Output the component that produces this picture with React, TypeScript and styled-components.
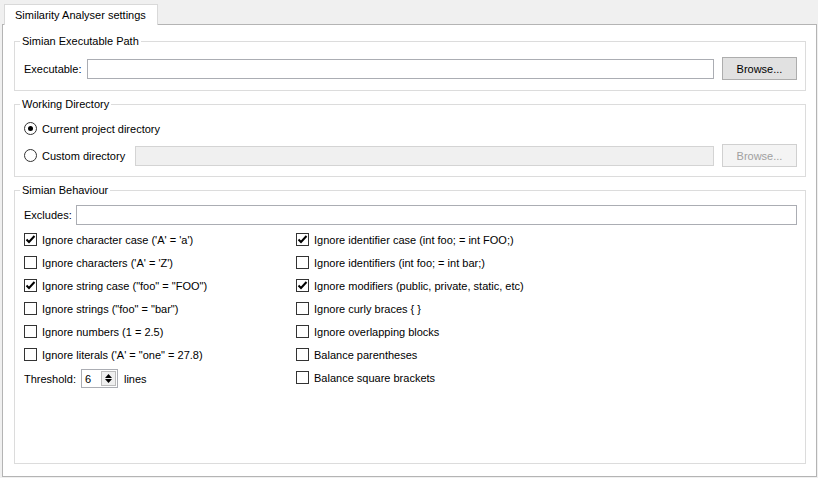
import React, { useState } from 'react';
import styled, { createGlobalStyle } from 'styled-components';

const GlobalStyle = createGlobalStyle`
    html, body {
        margin: 0;
        height: 100%;
        background: #f0f0f0;
        font-family: 'Liberation Sans', Arial, sans-serif;
        font-size: 11px;
        color: #000;
    }
    #root {
        height: 100%;
    }
`;

const Page = styled.div`
    height: 100vh;
    box-sizing: border-box;
    padding: 4px 1px 1px 2px;
    display: flex;
    flex-direction: column;
`;

const TabStrip = styled.div`
    display: flex;
    padding-left: 2px;
`;

const Tab = styled.div`
    position: relative;
    z-index: 1;
    height: 21px;
    box-sizing: border-box;
    margin-bottom: -1px;
    padding: 0 11px 0 10px;
    background: #fff;
    border: 1px solid #d9d9d9;
    border-bottom: none;
    display: flex;
    align-items: center;
    white-space: nowrap;
`;

const Panel = styled.div`
    flex: 1;
    background: #fff;
    border: 1px solid #b4b4b4;
    padding: 10px 10px 12px 11px;
    display: flex;
    flex-direction: column;
    gap: 7px;
`;

const Group = styled.fieldset<{ $grow?: boolean; $top?: number; $bottom?: number }>`
    margin: 0;
    min-width: 0;
    border: 1px solid #dcdcdc;
    padding: ${({ $top, $bottom }) => `${$top ?? 9}px 8px ${$bottom ?? 9}px 8px`};
    display: flex;
    flex-direction: column;
    flex: ${({ $grow }) => ($grow ? 1 : 'none')};
`;

const Legend = styled.legend`
    padding: 0 2px;
    margin-left: -3px;
    line-height: 13px;
`;

const Row = styled.div<{ $gap?: number }>`
    display: flex;
    align-items: center;
    gap: ${({ $gap }) => $gap ?? 8}px;
`;

const Label = styled.span<{ $after?: number }>`
    white-space: nowrap;
    margin-left: 1px;
    margin-right: ${({ $after }) => $after ?? 0}px;
`;

const TextBox = styled.input`
    flex: 1;
    height: 20px;
    box-sizing: border-box;
    border: 1px solid #abadb3;
    background: ${({ disabled }) => (disabled ? '#f0f0f0' : '#fff')};
    border-color: ${({ disabled }) => (disabled ? '#d4d4d4' : '#abadb3')};
    font: inherit;
    padding: 0 3px;
    outline: none;
`;

const Button = styled.button`
    width: 75px;
    height: 23px;
    box-sizing: border-box;
    font: inherit;
    color: #000;
    background: #e1e1e1;
    border: 1px solid #adadad;
    padding: 0;

    &:disabled {
        color: #a0a0a0;
        background: #f4f4f4;
        border-color: #d0d0d0;
    }
`;

const Stack = styled.div<{ $gap: number }>`
    display: flex;
    flex-direction: column;
    gap: ${({ $gap }) => $gap}px;
`;

const OptionLine = styled.label`
    display: flex;
    align-items: center;
    height: 17px;
    gap: 5px;
    padding-left: 1px;
    white-space: nowrap;
    cursor: default;
`;

const Box = styled.span`
    width: 13px;
    height: 13px;
    box-sizing: border-box;
    border: 1px solid #333;
    background: #fff;
    display: flex;
    align-items: center;
    justify-content: center;
    flex: none;
`;

const RadioCircle = styled(Box)`
    border-radius: 50%;
    border-color: #333;
`;

const Dot = styled.span`
    width: 5px;
    height: 5px;
    border-radius: 50%;
    background: #000;
`;

const Columns = styled.div`
    display: grid;
    grid-template-columns: 272px 1fr;
    margin-top: 6px;
`;

const SpinBox = styled.div`
    width: 37px;
    height: 19px;
    box-sizing: border-box;
    border: 1px solid #abadb3;
    display: flex;
    align-items: center;
    margin: 0 6px 0 5px;
`;

const SpinValue = styled.span`
    flex: 1;
    padding-left: 3px;
`;

const SpinArrows = styled.div`
    width: 15px;
    height: 15px;
    margin-right: 1px;
    box-sizing: border-box;
    border: 1px solid #bcbcbc;
    background: #efefef;
    display: flex;
    flex-direction: column;
    align-items: center;
    justify-content: center;
    gap: 1px;
`;

function Check({ checked, label }: { checked: boolean; label: string }) {
    const [on, setOn] = useState(checked);
    return (
        <OptionLine onClick={() => setOn(v => !v)}>
            <Box>
                {on && (
                    <svg width="11" height="11" viewBox="0 0 11 11">
                        <path d="M1.5 5.5 L4 8 L9.5 2" fill="none" stroke="#000" strokeWidth="2" />
                    </svg>
                )}
            </Box>
            {label}
        </OptionLine>
    );
}

function Radio({ checked, label }: { checked: boolean; label: string }) {
    return (
        <OptionLine>
            <RadioCircle>{checked && <Dot />}</RadioCircle>
            {label}
        </OptionLine>
    );
}

const leftOptions: [string, boolean][] = [
    ["Ignore character case ('A' = 'a')", true],
    ["Ignore characters ('A' = 'Z')", false],
    ['Ignore string case ("foo" = "FOO")', true],
    ['Ignore strings ("foo" = "bar")', false],
    ['Ignore numbers (1 = 2.5)', false],
    ['Ignore literals (\'A\' = "one" = 27.8)', false],
];

const rightOptions: [string, boolean][] = [
    ['Ignore identifier case (int foo; = int FOO;)', true],
    ['Ignore identifiers (int foo; = int bar;)', false],
    ['Ignore modifiers (public, private, static, etc)', true],
    ['Ignore curly braces { }', false],
    ['Ignore overlapping blocks', false],
    ['Balance parentheses', false],
    ['Balance square brackets', false],
];

export default function App() {
    return (
        <Page>
            <GlobalStyle />
            <TabStrip>
                <Tab>Similarity Analyser settings</Tab>
            </TabStrip>
            <Panel>
                <Group $bottom={10}>
                    <Legend>Simian Executable Path</Legend>
                    <Row>
                        <Label $after={-2}>Executable:</Label>
                        <TextBox type="text" />
                        <Button>Browse...</Button>
                    </Row>
                </Group>

                <Group $bottom={9}>
                    <Legend>Working Directory</Legend>
                    <Stack $gap={7}>
                        <Radio checked label="Current project directory" />
                        <Row>
                            <Radio checked={false} label="Custom directory" />
                            <TextBox type="text" disabled style={{ marginLeft: 2 }} />
                            <Button disabled>Browse...</Button>
                        </Row>
                    </Stack>
                </Group>

                <Group $grow $top={8}>
                    <Legend>Simian Behaviour</Legend>
                    <Row>
                        <Label $after={-4}>Excludes:</Label>
                        <TextBox type="text" />
                    </Row>
                    <Columns>
                        <Stack $gap={6}>
                            {leftOptions.map(([label, on]) => (
                                <Check key={label} label={label} checked={on} />
                            ))}
                            <Row $gap={0}>
                                <Label>Threshold:</Label>
                                <SpinBox>
                                    <SpinValue>6</SpinValue>
                                    <SpinArrows>
                                        <svg width="7" height="4" viewBox="0 0 7 4">
                                            <path d="M3.5 0 L7 4 L0 4 Z" fill="#000" />
                                        </svg>
                                        <svg width="7" height="4" viewBox="0 0 7 4">
                                            <path d="M0 0 L7 0 L3.5 4 Z" fill="#000" />
                                        </svg>
                                    </SpinArrows>
                                </SpinBox>
                                <span>lines</span>
                            </Row>
                        </Stack>
                        <Stack $gap={6}>
                            {rightOptions.map(([label, on]) => (
                                <Check key={label} label={label} checked={on} />
                            ))}
                        </Stack>
                    </Columns>
                </Group>
            </Panel>
        </Page>
    );
}
